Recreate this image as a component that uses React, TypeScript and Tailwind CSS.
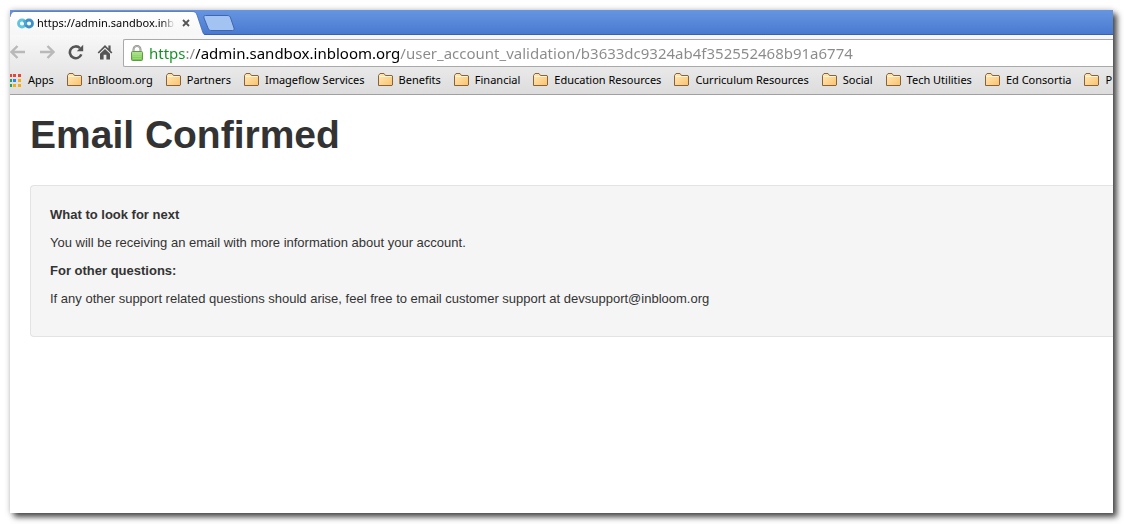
import { useState } from "react";

const bookmarks = [
  "InBloom.org",
  "Partners",
  "Imageflow Services",
  "Benefits",
  "Financial",
  "Education Resources",
  "Curriculum Resources",
  "Social",
  "Tech Utilities",
  "Ed Consortia",
  "P",
];

function InfinityLogo() {
  return (
    <svg width="17" height="11" viewBox="0 0 17 11" fill="none" className="shrink-0" aria-hidden="true">
      <circle cx="5" cy="5.5" r="3.5" stroke="#5fc4de" strokeWidth="2.8" />
      <circle cx="12" cy="5.5" r="3.5" stroke="#3f8fc9" strokeWidth="2.8" />
      <path d="M6.500 2.600C8 3.400 8.600 4.800 9.200 6.800" stroke="#4aaad6" strokeWidth="2.400" />
    </svg>
  );
}

function FolderIcon() {
  return (
    <svg width="16" height="14" viewBox="0 0 16 14" className="shrink-0" aria-hidden="true">
      <defs>
        <linearGradient id="folder" x1="0" y1="0" x2="1" y2="1">
          <stop offset="0" stopColor="#ffeab8" />
          <stop offset="1" stopColor="#fbc26c" />
        </linearGradient>
      </defs>
      <path
        d="M0.500 12.500V2.500L2 0.500H6L7.500 2.500H14L14.500 3V12L14 12.500Z"
        fill="url(#folder)"
        stroke="#86623e"
        strokeLinejoin="round"
      />
      <path d="M1.500 3.500H13.500" stroke="#fff3d2" />
    </svg>
  );
}

function AppsIcon() {
  return (
    <svg width="11" height="13" viewBox="0 0 11 13" className="shrink-0" aria-hidden="true">
      <path d="M0 0h2v3H0zM3 0h3v3H3zM8 0h3v3H8z" fill="#ee4035" />
      <path d="M0 5h2v3H0z" fill="#23a45a" />
      <path d="M3 5h3v3H3z" fill="#2b87f0" />
      <path d="M8 5h3v3H8zM3 10h3v3H3zM8 10h3v3H8z" fill="#f5ad0c" />
      <path d="M0 10h2v3H0z" fill="#23a45a" />
    </svg>
  );
}

function ArrowIcon({ flip }: { flip?: boolean }) {
  return (
    <svg
      width="16"
      height="14"
      viewBox="0 0 16 14"
      fill="none"
      stroke="#b9b9b9"
      strokeWidth="2.4"
      className={flip ? "-scale-x-100" : ""}
      aria-hidden="true"
    >
      <path d="M15 7H2M7.500 1L1.500 7L7.500 13" />
    </svg>
  );
}

function ReloadIcon() {
  return (
    <svg width="16" height="16" viewBox="0 0 16 16" fill="none" aria-hidden="true">
      <path d="M12 4.200A5.900 5.900 0 1 0 13.300 10.400" stroke="#555" strokeWidth="2.600" />
      <path d="M15.200 0.800V7.200H8.800Z" fill="#555" />
    </svg>
  );
}

function HomeIcon() {
  return (
    <svg width="16" height="16" viewBox="0 0 16 16" fill="#555" aria-hidden="true">
      <path d="M8 1L0.600 8.400L1.800 9.600L8 3.600L14.200 9.600L15.400 8.400L13.600 6.600V1.500H11.400V4.400Z" />
      <path d="M8 5L3 9.800V15.500H6.600V10.800H9.400V15.500H13V9.800Z" />
    </svg>
  );
}

function LockIcon() {
  return (
    <svg width="12" height="16" viewBox="0 0 12 16" fill="none" className="shrink-0" aria-hidden="true">
      <defs>
        <linearGradient id="lock" x1="0" y1="0" x2="0" y2="1">
          <stop offset="0" stopColor="#b5e596" />
          <stop offset="1" stopColor="#6cc644" />
        </linearGradient>
      </defs>
      <path d="M2.500 7V4.500A3.500 3.500 0 0 1 9.500 4.500V7" stroke="#8a8f88" strokeWidth="2" />
      <path d="M2.500 7V4.500A3.500 3.500 0 0 1 9.500 4.500V7" stroke="#c9ccc7" strokeWidth="0.700" />
      <rect x="0.500" y="6.500" width="11" height="9" rx="1" fill="url(#lock)" stroke="#5f9b45" />
      <path d="M2 9.500H10M2 11.500H10M2 13.500H10" stroke="#a8e086" strokeWidth="0.700" />
    </svg>
  );
}

function TabStrip() {
  return (
    <div className="flex h-[25px] items-end border-b border-[#3a5fae] bg-linear-to-b from-[#6696e1] to-[#4a7ad0]">
      <div className="relative -mb-px flex h-6 w-[195px] items-center gap-1 pl-[7px]">
        <svg
          className="absolute inset-0"
          width="195"
          height="24"
          viewBox="0 0 195 24"
          fill="none"
          aria-hidden="true"
        >
          <defs>
            <linearGradient id="tab" x1="0" y1="0" x2="0" y2="1">
              <stop offset="0" stopColor="#ffffff" />
              <stop offset="1" stopColor="#f6f6f6" />
            </linearGradient>
          </defs>
          <path
            d="M0 24V6C1 2 2 0.5 5 0.5H182C185 0.5 186 1.5 187 4L192 19C193 22 193.500 23.500 195 24Z"
            fill="url(#tab)"
          />
          <path
            d="M0 6C1 2 2 0.500 5 0.500H182C185 0.500 186 1.500 187 4L192 19C193 22 193.500 23.500 195 23.500"
            stroke="#3f62a8"
            strokeOpacity="0.7"
          />
        </svg>
        <button type="button" className="relative flex min-w-0 flex-1 items-center gap-[3px] text-left">
          <InfinityLogo />
          <span className="w-[138px] overflow-hidden mask-r-from-90% mask-r-to-100% text-[11px] leading-4 whitespace-nowrap">
            https://admin.sandbox.inbloom.org
          </span>
        </button>
        <button type="button" aria-label="Close tab" className="relative mr-[15px] flex h-4 w-2 items-center">
          <svg width="8" height="8" viewBox="0 0 8 8" stroke="#555" strokeWidth="1.8" aria-hidden="true">
            <path d="M1 1L7 7M7 1L1 7" />
          </svg>
        </button>
      </div>
      <button type="button" aria-label="New tab" className="-ml-1 mb-[3px]">
        <svg width="34" height="16" viewBox="0 0 34 16" aria-hidden="true">
          <path
            d="M4.500 0.500H26C28 0.500 29 1 29.600 3L33 13C33.400 14.500 33 15.500 31.500 15.500H11C8.500 15.500 7.600 15 7 13L3 3C2.500 1.500 3 0.500 4.500 0.500Z"
            fill="#a3c4f3"
            stroke="#4266ac"
          />
        </svg>
      </button>
    </div>
  );
}

function Toolbar() {
  const [url, setUrl] = useState(
    "https://admin.sandbox.inbloom.org/user_account_validation/b3633dc9324ab4f352552468b91a6774",
  );
  return (
    <div className="flex h-8 items-center">
      <div className="flex w-[113px] shrink-0 items-center gap-[13px] pt-px">
        <button type="button" aria-label="Back">
          <ArrowIcon />
        </button>
        <button type="button" aria-label="Forward">
          <ArrowIcon flip />
        </button>
        <button type="button" aria-label="Reload">
          <ReloadIcon />
        </button>
        <button type="button" aria-label="Home">
          <HomeIcon />
        </button>
      </div>
      <label className="mt-1 flex h-7 min-w-0 flex-1 items-center gap-[6px] rounded-l-xs border border-r-0 border-[#a9a9a9] bg-white pl-[7px]">
        <LockIcon />
        <input
          type="text"
          aria-label="Address"
          value={url}
          onChange={(e) => setUrl(e.target.value)}
          className="min-w-0 flex-1 bg-[linear-gradient(90deg,#0f9120_0_36px,#8a8a8a_36px_47px,#000_47px_251px,#8a8a8a_251px)] bg-clip-text pb-px text-[15px] leading-6 text-transparent caret-black outline-none"
        />
      </label>
    </div>
  );
}

function BookmarksBar() {
  return (
    <nav
      aria-label="Bookmarks"
      className="flex h-7 items-center gap-[13px] overflow-hidden border-b border-[#a0a0a0] pb-px text-[11px] whitespace-nowrap"
    >
      <a href="#apps" className="flex shrink-0 items-center gap-[7px]">
        <AppsIcon />
        Apps
      </a>
      {bookmarks.map((name) => (
        <a key={name} href="#bookmark" className="flex shrink-0 items-center gap-[5px]">
          <FolderIcon />
          {name}
        </a>
      ))}
    </nav>
  );
}

export default function App() {
  return (
    <div className="flex min-h-screen flex-col bg-white pt-[10px] pr-[11px] pb-[11px] pl-[10px]">
      <div className="flex min-w-0 flex-1 flex-col overflow-hidden bg-white shadow-[4px_4px_6px_rgba(0,0,0,0.7),0_0_6px_rgba(0,0,0,0.2)]">
        <header className="bg-linear-to-b from-[#f8f8f8] from-30% to-[#dcdcdc] font-['Noto_Sans',sans-serif] text-black">
          <TabStrip />
          <Toolbar />
          <BookmarksBar />
        </header>
        <main className="flex-1 pl-5 font-['Liberation_Sans',Arial,sans-serif] text-[13px] leading-[18px] text-[#333]">
          <h1 className="pt-5 text-[39px] leading-10 font-bold whitespace-nowrap">Email Confirmed</h1>
          <section className="mt-[30px] rounded-l-sm border border-r-0 border-[#e3e3e3] bg-[#f5f5f5] pt-5 pb-[18px] pl-[19px]">
            <h2 className="mb-[10px] font-bold">What to look for next</h2>
            <p className="mb-[10px]">You will be receiving an email with more information about your account.</p>
            <h2 className="mb-[10px] font-bold">For other questions:</h2>
            <p className="mb-[10px]">
              If any other support related questions should arise, feel free to email customer support at
              devsupport@inbloom.org
            </p>
          </section>
        </main>
      </div>
    </div>
  );
}
